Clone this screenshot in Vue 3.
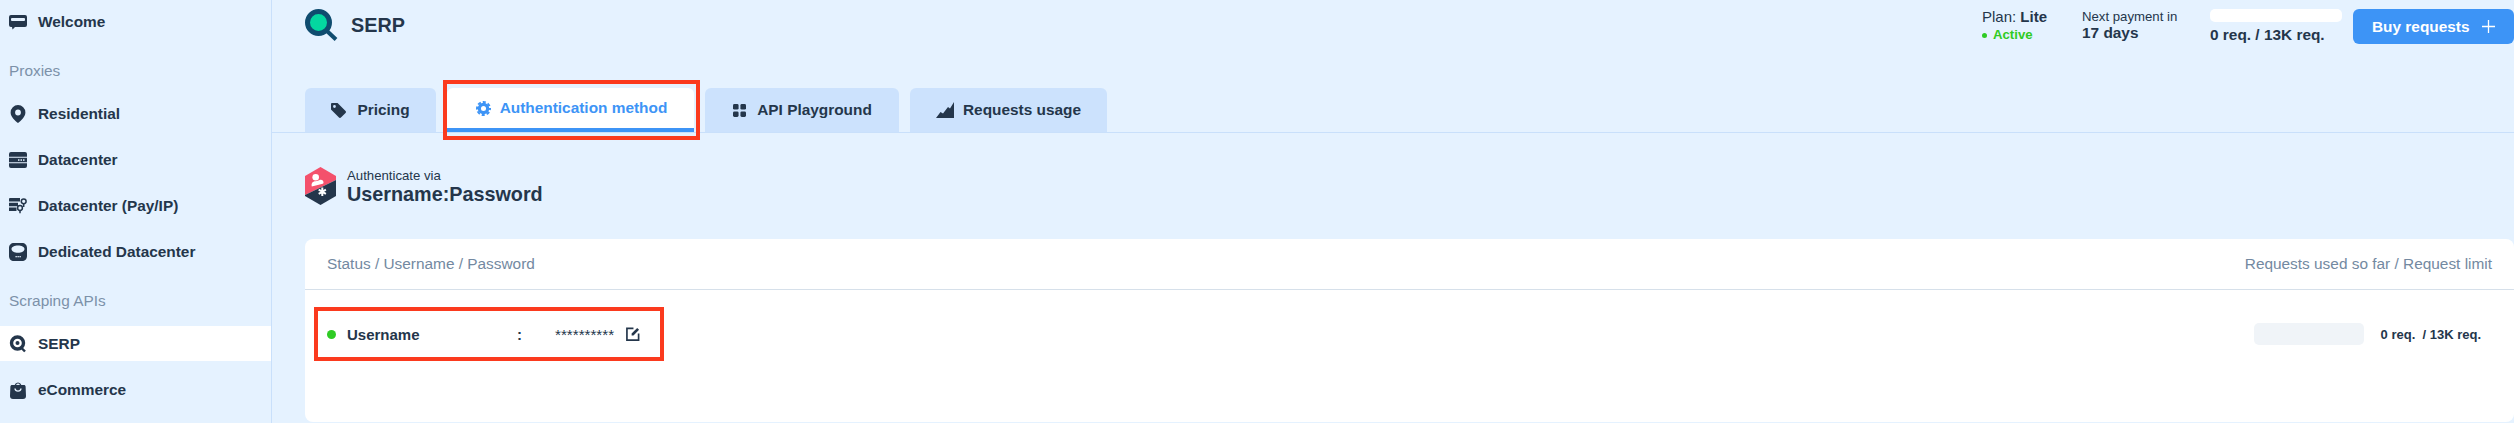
<template>
  <div class="layout">
    <aside class="sidebar">
      <a class="nav-item welcome">
        <svg class="nav-icon" viewBox="0 0 18 16"><path d="M2 1h14a2 2 0 0 1 2 2v8a2 2 0 0 1-2 2H6l-2.500 2.500L3 13H2a2 2 0 0 1-2-2V3a2 2 0 0 1 2-2z" fill="#24364b"/><rect x="2" y="4" width="14" height="3" rx="1" fill="#e5f2ff"/></svg>
        Welcome
      </a>
      <div class="nav-title first">Proxies</div>
      <a class="nav-item">
        <svg class="nav-icon" viewBox="0 0 18 18"><path fill-rule="evenodd" d="M9 0a7.400 7.400 0 0 1 7.400 7.400C16.400 12 11.500 16 9 18 6.500 16 1.600 12 1.600 7.400A7.400 7.400 0 0 1 9 0zm0 4.600a2.900 2.900 0 1 0 0 5.800 2.900 2.900 0 0 0 0-5.800z" fill="#24364b"/></svg>
        Residential
      </a>
      <a class="nav-item">
        <svg class="nav-icon" viewBox="0 0 18 16"><path d="M2 0h14a2 2 0 0 1 2 2v2.800H0V2a2 2 0 0 1 2-2zM0 5.800h18v4.400H0zM0 11.200h18V14a2 2 0 0 1-2 2H2a2 2 0 0 1-2-2z" fill="#24364b"/><rect x="9" y="7.300" width="1.500" height="1.500" fill="#e5f2ff"/><rect x="11.500" y="7.300" width="1.500" height="1.500" fill="#e5f2ff"/><rect x="14" y="7.300" width="1.500" height="1.500" fill="#e5f2ff"/></svg>
        Datacenter
      </a>
      <a class="nav-item">
        <svg class="nav-icon" viewBox="0 0 18 16"><path d="M1 0h10v3.500H0V1a1 1 0 0 1 1-1zM0 4.800h9v3.400H0zM0 9.500h7.500V13H0z" fill="#24364b"/><g fill="none" stroke="#24364b" stroke-width="1.500"><circle cx="14.700" cy="3.300" r="2.400"/><circle cx="11" cy="10" r="2.400"/></g><path d="M14.700 6v3M11 12.600v2.700" stroke="#24364b" stroke-width="1.500"/></svg>
        Datacenter (Pay/IP)
      </a>
      <a class="nav-item">
        <svg class="nav-icon" viewBox="0 0 18 18"><path fill-rule="evenodd" d="M5 0h8c3 0 5 2 5 5v8c0 3-2 5-5 5H5c-3 0-5-2-5-5V5c0-3 2-5 5-5zm4 2.500C5.500 2.500 2.500 3.800 2.500 6S5.500 9.800 9 9.800 15.500 8.200 15.500 6 12.500 2.500 9 2.500z" fill="#24364b"/><g fill="#e5f2ff"><rect x="6.500" y="13" width="1.300" height="1.300"/><rect x="8.500" y="13" width="1.300" height="1.300"/><rect x="10.500" y="13" width="1.300" height="1.300"/></g></svg>
        Dedicated Datacenter
      </a>
      <div class="nav-title scraping">Scraping APIs</div>
      <a class="nav-item current">
        <svg class="nav-icon" viewBox="0 0 18 18"><circle cx="8.500" cy="8" r="6" fill="none" stroke="#24364b" stroke-width="3.400"/><circle cx="8.500" cy="8" r="2" fill="#24364b"/><path d="M12.500 13l3.500 3.500" stroke="#24364b" stroke-width="2.400"/></svg>
        SERP
      </a>
      <a class="nav-item">
        <svg class="nav-icon" viewBox="0 0 18 18"><path fill-rule="evenodd" d="M3 4h2.700a3.400 3.400 0 0 1 6.600 0H15c.9 0 1.500.6 1.600 1.500L17 15c0 1.800-1 3-3 3H4c-2 0-3-1.200-3-3l.4-9.500C1.500 4.600 2.100 4 3 4zm4.100 0h3.800a2 2 0 0 0-3.800 0z" fill="#24364b"/><path d="M6 7.500c.5 3.500 5.500 3.500 6 0" fill="none" stroke="#e5f2ff" stroke-width="1.400"/></svg>
        eCommerce
      </a>
    </aside>

    <main class="main">
      <header class="top">
        <div class="top-row">
          <div class="product">
            <svg class="product-icon" viewBox="0 0 33 33">
              <circle cx="13.500" cy="13.500" r="11" fill="#04d7a0" stroke="#0f4c6f" stroke-width="5"/>
              <path d="M22 22l9 8.500" stroke="#0f4c6f" stroke-width="4"/>
            </svg>
            <span class="product-name">SERP</span>
          </div>
          <div class="summary">
            <div class="plan">
              <div>Plan: <b>Lite</b></div>
              <div class="active"><i class="active-dot"></i>Active</div>
            </div>
            <div class="payment">
              <div>Next payment in</div>
              <b>17 days</b>
            </div>
            <div class="usage">
              <div class="usage-bar"></div>
              <b>0 req. / 13K req.</b>
            </div>
            <button class="buy">
              Buy requests
              <svg class="buy-plus" viewBox="0 0 13 13"><path d="M6.500 0v13M0 6.500h13" stroke="#fff" stroke-width="1.300"/></svg>
            </button>
          </div>
        </div>
        <nav class="tabs">
          <a class="tab pricing">
            <svg class="tab-icon" viewBox="0 0 16 16"><path fill-rule="evenodd" d="M1 0h6l8.500 8.500a1.500 1.500 0 0 1 0 2.100l-4.900 4.900a1.500 1.500 0 0 1-2.100 0L0 7V1a1 1 0 0 1 1-1zm2.700 2.200a1.500 1.500 0 1 0 0 3 1.500 1.500 0 0 0 0-3z" fill="#24364b"/></svg>
            Pricing
          </a>
          <a class="tab auth selected">
            <svg class="tab-icon gear" viewBox="0 0 16 16"><g fill="none" stroke="#3d94f6"><circle cx="8" cy="8" r="4.400" stroke-width="3.400"/><circle cx="8" cy="8" r="6.900" stroke-width="2.200" stroke-dasharray="3.300 2.120" stroke-dashoffset="1.650"/></g></svg>
            Authentication method
            <span class="red-mark tab-mark"></span>
          </a>
          <a class="tab playground">
            <svg class="tab-icon small" viewBox="0 0 14 14"><g fill="#24364b"><rect width="6" height="6" rx="1.500"/><rect x="8" width="6" height="6" rx="1.500"/><rect y="8" width="6" height="6" rx="1.500"/><rect x="8" y="8" width="6" height="6" rx="1.500"/></g></svg>
            API Playground
          </a>
          <a class="tab requests">
            <svg class="tab-icon wide" viewBox="0 0 18 16"><path d="M18 0v16H0l4.500-6 2.500 1.500L12 5l2 1.500z" fill="#24364b"/></svg>
            Requests usage
          </a>
        </nav>
      </header>

      <section class="content">
        <div class="method">
          <svg class="method-icon" viewBox="0 0 31 38">
            <path d="M15.500 0L31 9v4L0 28V9z" fill="#f4516c"/>
            <path d="M31 13v16l-15.500 9L0 29v-1z" fill="#24364b"/>
            <circle cx="10.700" cy="10.300" r="3.300" fill="#fff"/>
            <path d="M6.800 19.500c-.8-3 .8-5.200 3.800-5.200 1.800 0 3-.8 4.600-1.500 2.500-1 4.500 2.700 2.500 4z" fill="#fff"/>
            <path d="M17.300 20.500v8.400M13.700 22.600l7.200 4.200M20.900 22.600l-7.200 4.200" stroke="#fff" stroke-width="2"/>
          </svg>
          <div class="method-text">
            <div class="method-label">Authenticate via</div>
            <div class="method-name">Username:Password</div>
          </div>
        </div>

        <div class="card">
          <div class="card-head">
            <span>Status / Username / Password</span>
            <span>Requests used so far / Request limit</span>
          </div>
          <div class="card-row">
            <div class="credentials">
              <i class="status-dot"></i>
              <b class="username">Username</b>
              <b class="colon">:</b>
              <span class="stars">**********</span>
              <svg class="edit" viewBox="0 0 15 15"><path d="M8 1.500H1v12.500h12.500V7" fill="none" stroke="#24364b" stroke-width="1.800"/><path d="M6 9.200V7l6-6 2 2-6 6.200z" fill="#24364b"/></svg>
              <span class="red-mark row-mark"></span>
            </div>
            <div class="row-usage">
              <div class="row-bar"></div>
              <b>0 req. &nbsp;/ 13K req.</b>
            </div>
          </div>
        </div>
      </section>
    </main>
  </div>
</template>

<script setup>
</script>

<style>
body {
  background: #e5f2ff;
  overflow: hidden;
}
</style>

<style scoped>
.layout {
  display: flex;
  height: 423px;
  font-family: "Liberation Sans", Arial, sans-serif;
  color: #24364b;
  background: #e5f2ff;
  overflow: hidden;
}

.sidebar {
  width: 271px;
  flex-shrink: 0;
  padding-top: 4px;
  border-right: 1px solid #c9e0fb;
}

.nav-item {
  display: flex;
  align-items: center;
  height: 35px;
  margin-bottom: 11px;
  padding-left: 9px;
  font-size: 15.4px;
  font-weight: 700;
}

.nav-item.welcome {
  margin-bottom: 14px;
}

.nav-item.current {
  background: #fff;
}

.nav-icon {
  width: 18px;
  height: 18px;
  margin-right: 11px;
}

.nav-title {
  height: 35px;
  line-height: 35px;
  padding-left: 9px;
  margin: 14px 0 7px;
  font-size: 15.4px;
  color: #7c91a9;
}

.nav-title.first {
  margin-top: 3px;
  margin-bottom: 8px;
}

.nav-title.scraping {
  margin-bottom: 8px;
}

.main {
  flex: 1;
  min-width: 0;
}

.top {
  height: 132px;
  padding-left: 33px;
  border-bottom: 1px solid #c9e0fb;
  display: flex;
  flex-direction: column;
  justify-content: space-between;
}

.top-row {
  display: flex;
  justify-content: space-between;
  padding-top: 9px;
}

.product {
  display: flex;
  align-items: center;
  height: 33px;
}

.product-icon {
  width: 33px;
  height: 33px;
  margin-right: 13px;
}

.product-name {
  font-size: 19.8px;
  font-weight: 700;
}

.summary {
  display: flex;
  font-size: 13.2px;
  line-height: 16px;
}

.plan {
  width: 100px;
  font-size: 15px;
}

.active {
  display: flex;
  align-items: center;
  margin-top: 2px;
  font-size: 13.2px;
  font-weight: 700;
  color: #2fcb24;
}

.active-dot {
  width: 5px;
  height: 5px;
  margin-right: 6px;
  border-radius: 50%;
  background: #2fcb24;
}

.payment {
  width: 128px;
}

.payment b {
  font-size: 15.4px;
}

.usage {
  width: 143px;
  font-size: 15.4px;
}

.usage-bar {
  width: 132px;
  height: 13px;
  margin-bottom: 5px;
  border-radius: 5px;
  background: #fff;
}

.buy {
  display: flex;
  align-items: center;
  gap: 12px;
  width: 161px;
  height: 35px;
  padding: 0 0 0 19px;
  border: 0;
  border-radius: 6px;
  background: #3d94f6;
  color: #fff;
  font: 700 15.4px "Liberation Sans", Arial, sans-serif;
}

.buy-plus {
  width: 13px;
  height: 13px;
}

.tabs {
  display: flex;
  gap: 11px;
}

.tab {
  position: relative;
  display: flex;
  align-items: center;
  justify-content: center;
  height: 44px;
  box-sizing: border-box;
  background: #cce2fd;
  border-radius: 6px 6px 0 0;
  font-size: 15.4px;
  font-weight: 700;
}

.pricing { width: 131px; }
.auth { width: 247px; }
.playground { width: 194px; }
.requests { width: 197px; }

.tab.selected {
  background: #fff;
  color: #3d94f6;
  border-bottom: 4px solid #3d94f6;
}

.tab-icon {
  width: 15px;
  height: 15px;
  margin-right: 11px;
}

.tab-icon.gear {
  margin-right: 9px;
  margin-left: 2px;
}

.tab-icon.small {
  width: 13px;
  height: 13px;
  margin-left: 1px;
}

.tab-icon.wide {
  width: 18px;
  height: 16px;
  margin-right: 9px;
}

.red-mark {
  position: absolute;
  box-sizing: border-box;
  border: 4px solid #fb3a1e;
}

.tab-mark {
  top: -8px;
  left: -4px;
  right: -6px;
  bottom: -12px;
}

.row-mark {
  top: 0;
  left: -13px;
  right: 0;
  bottom: 0;
}

.content {
  padding: 34px 0 0 33px;
}

.method {
  display: flex;
  align-items: center;
  height: 38px;
  margin-bottom: 34px;
}

.method-icon {
  width: 31px;
  height: 38px;
  margin-right: 11px;
}

.method-text {
  padding-top: 2px;
}

.method-label {
  font-size: 13.2px;
  line-height: 15px;
}

.method-name {
  font-size: 19.8px;
  font-weight: 700;
  line-height: 23px;
}

.card {
  background: #fff;
  border-radius: 8px;
  height: 183px;
}

.card-head {
  display: flex;
  justify-content: space-between;
  align-items: center;
  height: 50px;
  padding: 0 22px;
  border-bottom: 1px solid #d6e0ea;
  font-size: 15.4px;
  color: #7389a1;
}

.card-row {
  display: flex;
  justify-content: space-between;
  align-items: center;
  padding: 17px 33px 0 22px;
}

.credentials {
  position: relative;
  display: flex;
  align-items: center;
  width: 337px;
  height: 54px;
}

.status-dot {
  width: 9px;
  height: 9px;
  margin-right: 11px;
  border-radius: 50%;
  background: #2fcb24;
}

.username {
  width: 170px;
  font-size: 15px;
}

.colon {
  width: 38px;
  font-size: 15px;
}

.stars {
  width: 71px;
  font-size: 15.2px;
}

.edit {
  width: 14px;
  height: 14px;
}

.row-usage {
  display: flex;
  align-items: center;
  font-size: 13px;
}

.row-bar {
  width: 110px;
  height: 22px;
  margin-right: 17px;
  border-radius: 5px;
  background: #f0f4f8;
}
</style>
